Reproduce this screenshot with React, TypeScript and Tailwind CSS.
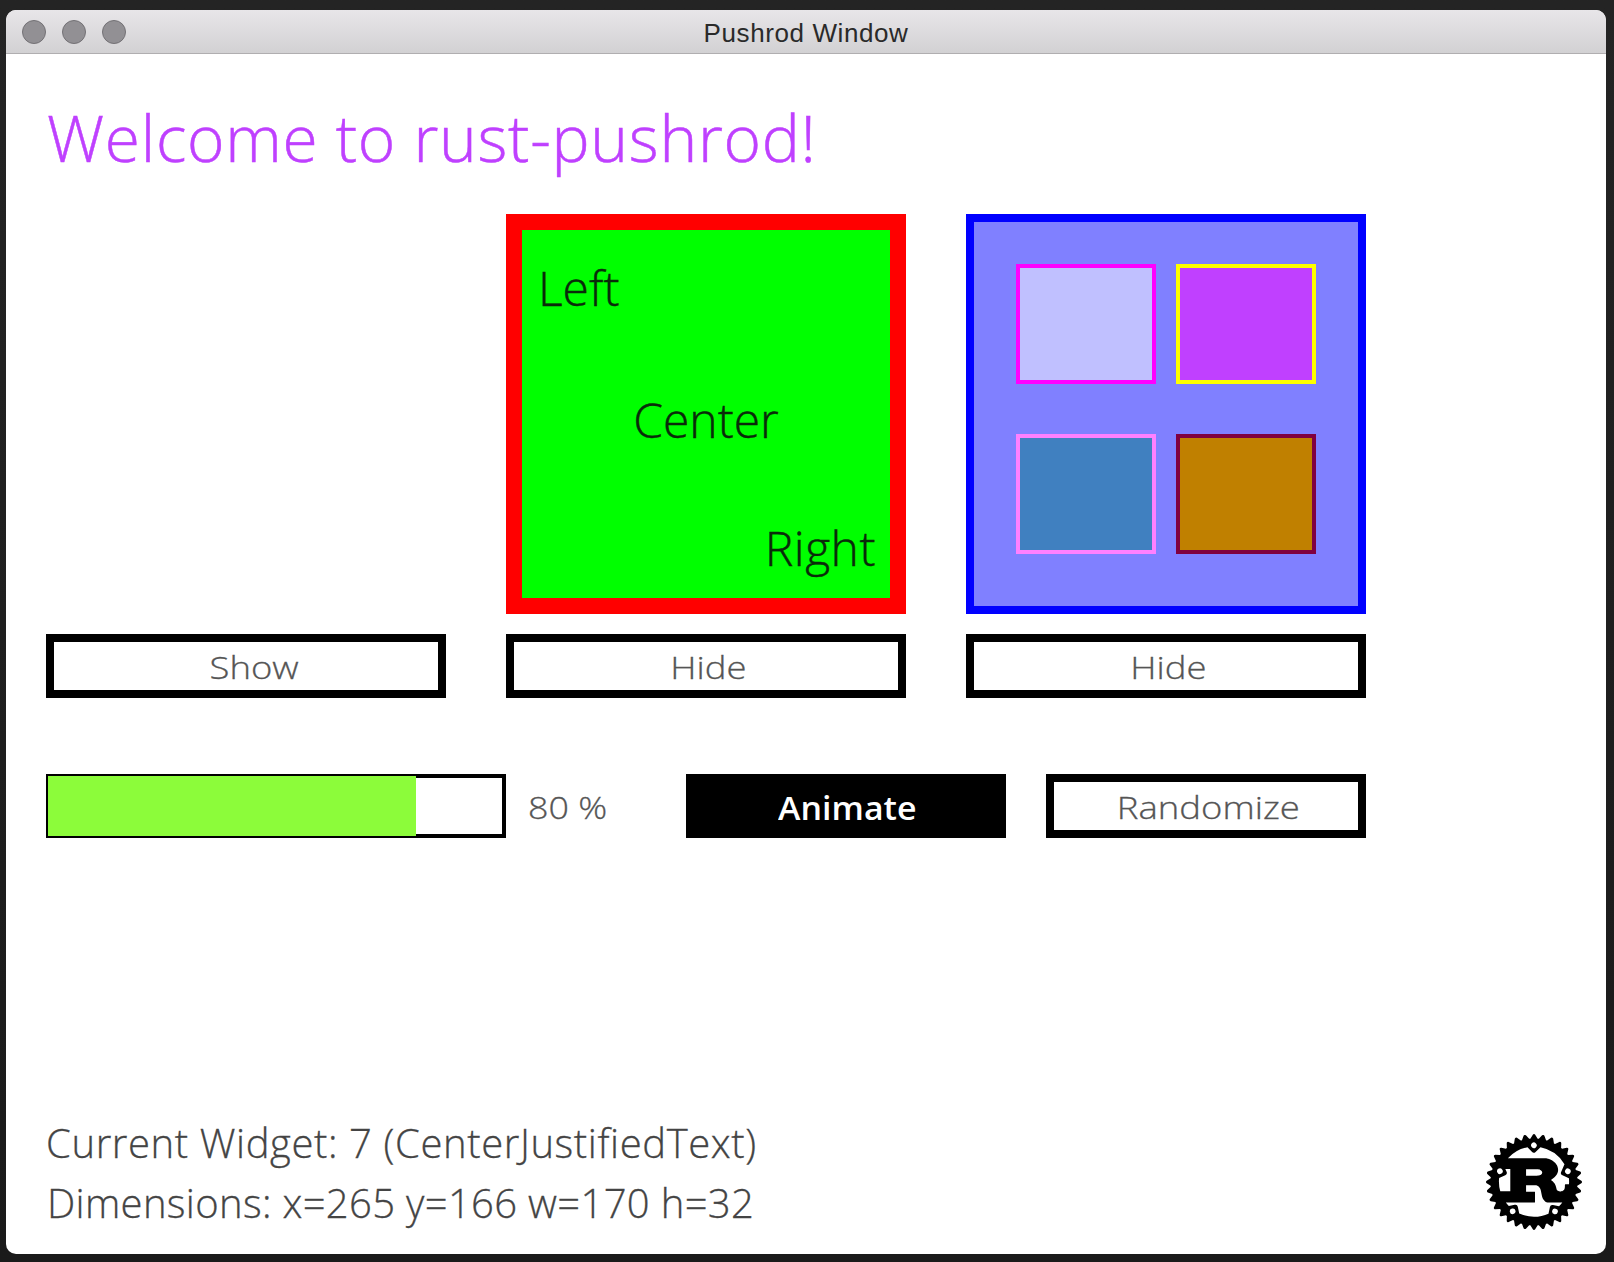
import { SiRust } from 'react-icons/si'

function TrafficDot() {
  return <div className="w-6 h-6 rounded-full bg-[#929094] border border-[#737175]" />
}

function OutlineButton({ label, width, inset }: { label: string; width: string; inset: string }) {
  return (
    <div className={`${width} ${inset} h-16 pt-[2px] border-8 border-black bg-white flex items-center justify-center text-[32px] font-light text-[#555555] [-webkit-text-stroke:0.3px]`}>
      <span className="inline-block scale-x-[1.14]">{label}</span>
    </div>
  )
}

function SmallBox({ border, fill }: { border: string; fill: string }) {
  return <div className={`w-[140px] h-[120px] border-4 ${border} ${fill}`} />
}

export default function App() {
  return (
    <div className="w-[1614px] h-[1262px] bg-gradient-to-b from-[#242424] to-[#1a1a1a] pt-2.5 px-1.5 overflow-hidden font-['Open_Sans',sans-serif]">
      <div className="w-[1600px] h-[1244px] rounded-[10px] overflow-hidden bg-white flex flex-col">
        {/* Title bar */}
        <div className="relative h-11 shrink-0 flex items-center gap-4 pl-4 bg-gradient-to-b from-[#e8e6e9] to-[#d2d1d3] border-b border-[#b0aeb0]">
          <TrafficDot />
          <TrafficDot />
          <TrafficDot />
          <span className="absolute inset-0 flex items-center justify-center pt-1 font-['Liberation_Sans',sans-serif] text-[26px] tracking-[0.6px] text-[#2a2a2a]">
            Pushrod Window
          </span>
        </div>

        <div className="flex-1 flex flex-col pl-10">
          <h1 className="h-[160px] pt-[40px] pl-px text-[64px] leading-[88px] font-light tracking-[0.72px] text-[#bf40ff] [-webkit-text-stroke:0.5px]">
            Welcome to rust-pushrod!
          </h1>

          {/* Three boxes */}
          <div className="flex gap-[60px] h-[400px]">
            <div className="w-[400px]" />
            <div className="w-[400px] border-[16px] border-[#ff0000] bg-[#00ff00] flex flex-col justify-between px-4 pb-[18px] text-[48px] leading-[64px] font-light text-[#0a2a0a] [-webkit-text-stroke:0.4px]">
              <div className="pt-[26px]">Left</div>
              <div className="text-center pt-1">Center</div>
              <div className="text-right tracking-[0.5px] -mr-[2px]">Right</div>
            </div>
            <div className="w-[400px] border-8 border-[#0000ff] bg-[#8080ff] pt-[42px] pl-[42px]">
              <div className="grid grid-cols-[140px_140px] gap-x-5 gap-y-[50px]">
                <SmallBox border="border-[#ff00ff]" fill="bg-[#c0c0ff]" />
                <SmallBox border="border-[#ffff00]" fill="bg-[#c040ff]" />
                <SmallBox border="border-[#ff80ff]" fill="bg-[#4080c0]" />
                <SmallBox border="border-[#800040]" fill="bg-[#c08000]" />
              </div>
            </div>
          </div>

          {/* Show / hide buttons */}
          <div className="flex gap-[60px] mt-5">
            <OutlineButton label="Show" width="w-[400px]" inset="pl-4" />
            <OutlineButton label="Hide" width="w-[400px]" inset="pl-1" />
            <OutlineButton label="Hide" width="w-[400px]" inset="pl-1" />
          </div>

          {/* Progress row */}
          <div className="flex items-center h-16 mt-[76px]">
            <div className="w-[460px] h-16 border-2 border-black bg-white flex">
              <div className="w-[368px] bg-[#8cfc3a]" />
              <div className="flex-1 border-y-2 border-r-2 border-black" />
            </div>
            <span className="ml-[22px] w-[158px] pt-[2px] text-[32px] font-light text-[#555555] [-webkit-text-stroke:0.3px]">
              <span className="inline-block origin-left scale-x-[1.12]">80 %</span>
            </span>
            <div className="w-[320px] h-16 pl-[2px] pt-1 bg-black flex items-center justify-center text-[32px] font-semibold text-white">
              <span className="inline-block scale-x-[1.06]">Animate</span>
            </div>
            <div className="ml-10">
              <OutlineButton label="Randomize" width="w-[320px]" inset="pl-1" />
            </div>
          </div>

          {/* Footer */}
          <div className="mt-auto flex items-end justify-between pr-6 pb-6">
            <div className="text-[40px] leading-[60px] font-light text-[#444444] [-webkit-text-stroke:0.3px] -mb-[3px]">
              <div className="tracking-[0.6px]">Current Widget: 7 (CenterJustifiedText)</div>
              <div className="tracking-[0.33px] pl-px">Dimensions: x=265 y=166 w=170 h=32</div>
            </div>
            <SiRust className="w-24 h-24 text-black" />
          </div>
        </div>
      </div>
    </div>
  )
}
